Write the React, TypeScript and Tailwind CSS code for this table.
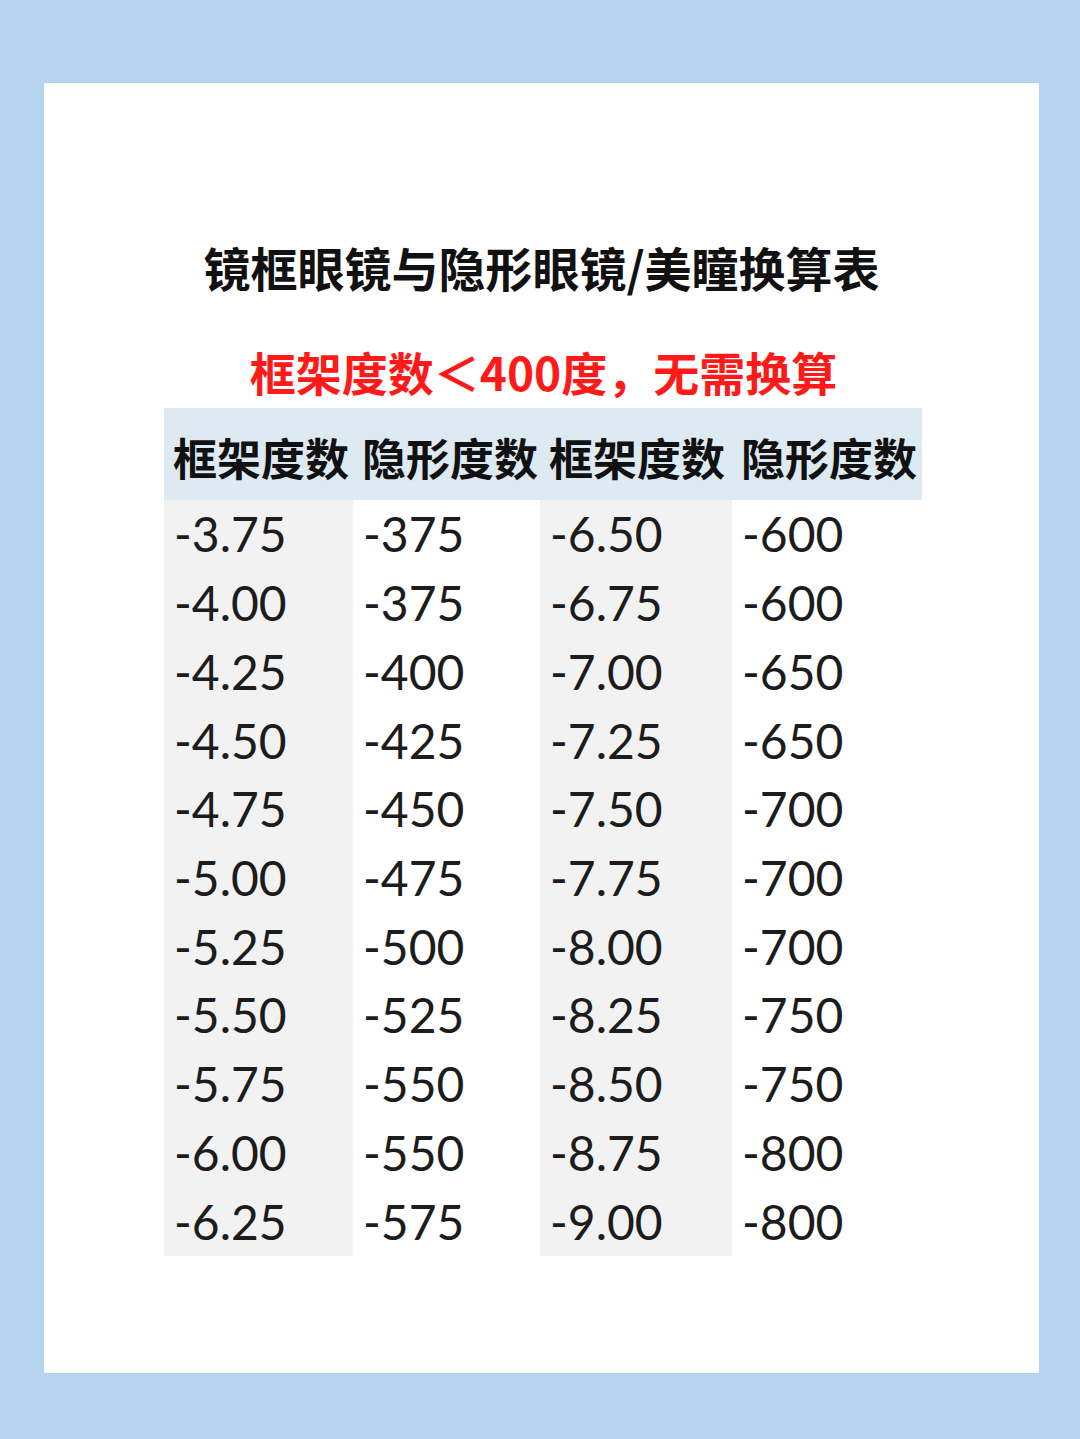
const rows: [string, string, string, string][] = [
  ["-3.75", "-375", "-6.50", "-600"],
  ["-4.00", "-375", "-6.75", "-600"],
  ["-4.25", "-400", "-7.00", "-650"],
  ["-4.50", "-425", "-7.25", "-650"],
  ["-4.75", "-450", "-7.50", "-700"],
  ["-5.00", "-475", "-7.75", "-700"],
  ["-5.25", "-500", "-8.00", "-700"],
  ["-5.50", "-525", "-8.25", "-750"],
  ["-5.75", "-550", "-8.50", "-750"],
  ["-6.00", "-550", "-8.75", "-800"],
  ["-6.25", "-575", "-9.00", "-800"],
];

const headers = ["框架度数", "隐形度数", "框架度数", "隐形度数"];

const cjk = "font-['Noto_Sans_CJK_SC','Noto_Sans',sans-serif]";

export default function App() {
  return (
    <div className="min-h-[1439px] w-[1080px] bg-[#b6d4f0] pt-[83px] pl-[44px]">
      <div className="flex h-[1290px] w-[995px] flex-col items-center bg-white pt-[156px]">
        <h1
          className={`${cjk} text-[47px] leading-[56px] font-bold text-[#111]`}
        >
          镜框眼镜与隐形眼镜/美瞳换算表
        </h1>
        <p
          className={`${cjk} mt-[48px] ml-[4px] text-[46px] leading-[56px] font-bold text-[#ff1a1a]`}
        >
          框架度数＜400度，无需换算
        </p>

        <div className="mt-[9px] ml-[3px] grid w-[758px] grid-cols-[189px_187px_192px_190px]">
          {headers.map((h, i) => (
            <div
              key={i}
              className={`${cjk} flex h-[92px] items-center overflow-hidden bg-[#deeaf2] pt-[6px] pl-[9px] text-[44px] leading-none font-bold whitespace-nowrap text-[#111]`}
            >
              {h}
            </div>
          ))}
          {rows.map((r, ri) =>
            r.map((v, ci) => (
              <div
                key={`${ri}-${ci}`}
                className={`flex h-[68.73px] items-center pl-[10px] font-['Lato','Open_Sans',sans-serif] text-[48px] leading-none text-[#1c1c1c] ${
                  ci % 2 === 0 ? "bg-[#f2f2f2]" : "bg-white"
                }`}
              >
                {v}
              </div>
            ))
          )}
        </div>
      </div>
    </div>
  );
}
